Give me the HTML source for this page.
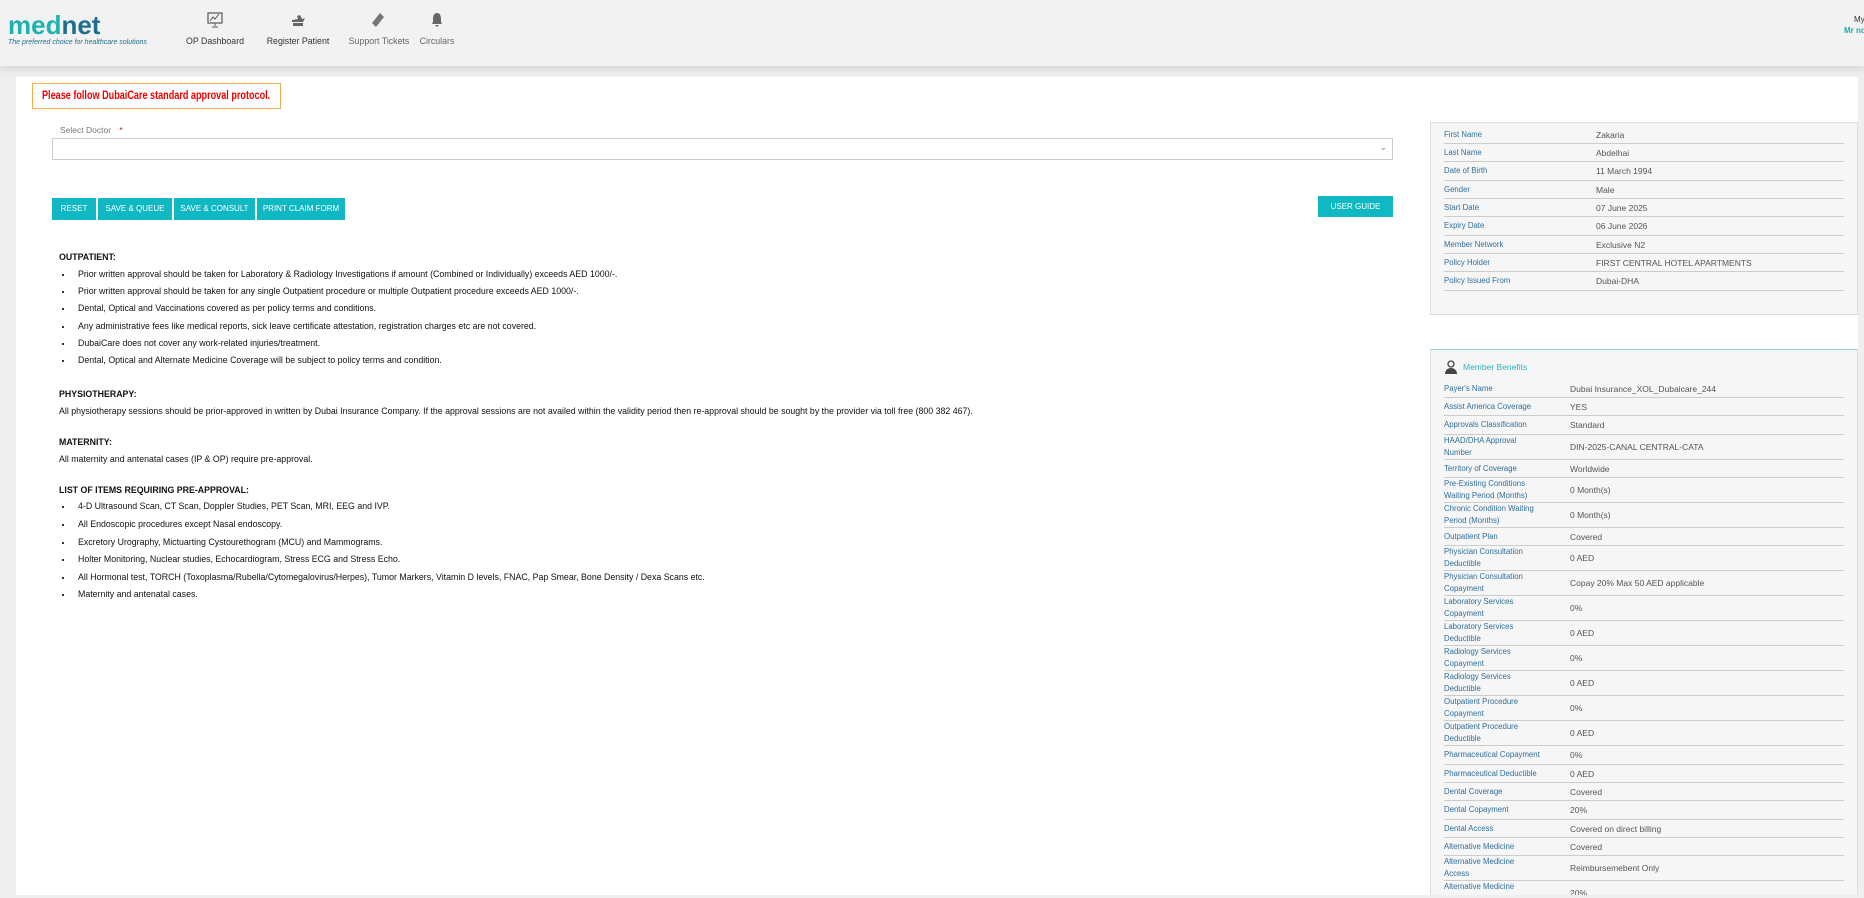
<!DOCTYPE html>
<html><head><meta charset="utf-8"><style>
*{margin:0;padding:0;box-sizing:border-box}
body{width:1864px;height:898px;overflow:hidden;background:#efefef;font-family:"Liberation Sans",Arial,sans-serif;position:relative;white-space:nowrap}
.hdr{position:absolute;left:0;top:0;width:1864px;height:66px;background:#f2f2f2;box-shadow:0 3px 8px rgba(0,0,0,.12)}
.logo{position:absolute;left:8px;top:10px;font-size:26px;font-weight:bold;color:#1fb3b0}
.logo span{color:#1e6f8e}
.tag{position:absolute;left:8px;top:39px;font-size:7px;font-style:italic;color:#1e6f8e}
.nav{position:absolute;top:36px;width:100px;margin-left:-50px;font-size:8.8px;color:#333;text-align:center;white-space:nowrap}
.nav svg{position:absolute;left:42px;top:-24px}
.main{position:absolute;left:16px;top:77px;width:1842px;height:818px;background:#fff}
.abs{position:absolute}
.alert{left:32px;top:83px;width:249px;height:26px;border:1px solid #f0ad4e;white-space:nowrap}
.alert span{position:absolute;left:9px;top:6px;color:#e00;font-weight:bold;font-size:11.5px;transform:scaleX(.79);transform-origin:0 0}
.btn{position:absolute;top:198px;height:22px;background:#0fb8c3;color:#fff;font-size:8px;text-align:center;line-height:22px;white-space:nowrap}
.txt{position:absolute;left:59px;font-size:8.8px;color:#111}
.b{font-weight:bold}
.li{position:absolute;left:59px;font-size:8.8px;color:#111}
.li::before{content:"";position:absolute;left:3px;top:5px;width:2px;height:2px;background:#333}
.li span{margin-left:19px}
.p1{left:1430px;top:122px;width:428px;height:193px;background:#f6f6f6;border:1px solid #ddd}
.row{display:flex;align-items:center;border-bottom:1px solid #ccc;margin:0 13px 0 13px}
.lab{color:#2f6f9a;font-size:7.8px;line-height:12px;white-space:nowrap}
.val{color:#555;font-size:8.5px}
.p2{left:1430px;top:349px;width:428px;height:546px;overflow:hidden;background:#f6f6f6;border:1px solid #ddd;border-top:1px solid #8fd3cc;border-bottom:none}
</style></head><body>
<div class="hdr">
 <div class="logo">med<span>net</span></div>
 <div class="tag">The preferred choice for healthcare solutions</div>
 <div class="nav" style="left:215px"><svg width="16" height="16" viewBox="0 0 16 16"><rect x="1" y="1" width="14" height="10" fill="none" stroke="#555" stroke-width="1.2"/><path d="M3 9l3-4 2 2 4-5M8 11v3M5 15h6" fill="none" stroke="#555" stroke-width="1"/></svg>OP Dashboard</div>
 <div class="nav" style="left:298px"><svg width="18" height="16" viewBox="0 0 18 16"><path d="M2 10h11l2-4-3 1-2-4-3 1 1 3-6 1z M3 11h10v3H3z" fill="#666"/></svg>Register Patient</div>
 <div class="nav" style="left:379px;color:#666"><svg width="14" height="16" viewBox="0 0 14 16"><path d="M9 1l4 4-8 10-4-4z" fill="#777"/></svg>Support Tickets</div>
 <div class="nav" style="left:437px;color:#666"><svg width="12" height="15" viewBox="0 0 12 15" style="left:44px"><path d="M6 1c-3 0-4 3-4 6v3l-1 2h10l-1-2V7c0-3-1-6-4-6zM4 13h4l-2 2z" fill="#666"/></svg>Circulars</div>
 <div class="abs" style="left:1854px;top:15px;font-size:8px;color:#333">My</div>
 <div class="abs" style="left:1844px;top:26px;font-size:8px;color:#2aa;font-weight:bold">Mr no</div>
</div>
<div class="main"></div>
<div class="abs alert"><span>Please follow DubaiCare standard approval protocol.</span></div>
<div class="abs" style="left:60px;top:125px;font-size:8.5px;color:#777">Select Doctor <span style="color:#e00;margin-left:6px">*</span></div>
<div class="abs" style="left:52px;top:138px;width:1341px;height:22px;border:1px solid #ccc;background:#fff"><span style="position:absolute;right:5px;top:3px;font-size:9px;color:#888">&#8964;</span></div>
<div class="btn" style="left:52px;width:44px">RESET</div>
<div class="btn" style="left:98px;width:74px">SAVE &amp; QUEUE</div>
<div class="btn" style="left:174px;width:81px">SAVE &amp; CONSULT</div>
<div class="btn" style="left:257px;width:88px">PRINT CLAIM FORM</div>
<div class="btn" style="left:1318px;width:75px;top:196px;height:21px;line-height:21px">USER GUIDE</div>

<div class="txt b" style="top:252px">OUTPATIENT:</div>
<div class="li" style="top:269px"><span>Prior written approval should be taken for Laboratory &amp; Radiology Investigations if amount (Combined or Individually) exceeds AED 1000/-.</span></div>
<div class="li" style="top:286px"><span>Prior written approval should be taken for any single Outpatient procedure or multiple Outpatient procedure exceeds AED 1000/-.</span></div>
<div class="li" style="top:303px"><span>Dental, Optical and Vaccinations covered as per policy terms and conditions.</span></div>
<div class="li" style="top:321px"><span>Any administrative fees like medical reports, sick leave certificate attestation, registration charges etc are not covered.</span></div>
<div class="li" style="top:338px"><span>DubaiCare does not cover any work-related injuries/treatment.</span></div>
<div class="li" style="top:355px"><span>Dental, Optical and Alternate Medicine Coverage will be subject to policy terms and condition.</span></div>
<div class="txt b" style="top:389px">PHYSIOTHERAPY:</div>
<div class="txt" style="top:406px">All physiotherapy sessions should be prior-approved in written by Dubai Insurance Company. If the approval sessions are not availed within the validity period then re-approval should be sought by the provider via toll free (800 382 467).</div>
<div class="txt b" style="top:437px">MATERNITY:</div>
<div class="txt" style="top:454px">All maternity and antenatal cases (IP &amp; OP) require pre-approval.</div>
<div class="txt b" style="top:485px">LIST OF ITEMS REQUIRING PRE-APPROVAL:</div>
<div class="li" style="top:501px"><span>4-D Ultrasound Scan, CT Scan, Doppler Studies, PET Scan, MRI, EEG and IVP.</span></div>
<div class="li" style="top:519px"><span>All Endoscopic procedures except Nasal endoscopy.</span></div>
<div class="li" style="top:537px"><span>Excretory Urography, Mictuarting Cystourethogram (MCU) and Mammograms.</span></div>
<div class="li" style="top:554px"><span>Holter Monitoring, Nuclear studies, Echocardiogram, Stress ECG and Stress Echo.</span></div>
<div class="li" style="top:572px"><span>All Hormonal test, TORCH (Toxoplasma/Rubella/Cytomegalovirus/Herpes), Tumor Markers, Vitamin D levels, FNAC, Pap Smear, Bone Density / Dexa Scans etc.</span></div>
<div class="li" style="top:589px"><span>Maternity and antenatal cases.</span></div>

<div class="abs p1">
<div style="height:3px"></div>
<div class="row" style="height:18px"><div class="lab" style="width:152px">First Name</div><div class="val">Zakaria</div></div>
<div class="row" style="height:18px"><div class="lab" style="width:152px">Last Name</div><div class="val">Abdelhai</div></div>
<div class="row" style="height:19px"><div class="lab" style="width:152px">Date of Birth</div><div class="val">11 March 1994</div></div>
<div class="row" style="height:18px"><div class="lab" style="width:152px">Gender</div><div class="val">Male</div></div>
<div class="row" style="height:18px"><div class="lab" style="width:152px">Start Date</div><div class="val">07 June 2025</div></div>
<div class="row" style="height:19px"><div class="lab" style="width:152px">Expiry Date</div><div class="val">06 June 2026</div></div>
<div class="row" style="height:18px"><div class="lab" style="width:152px">Member Network</div><div class="val">Exclusive N2</div></div>
<div class="row" style="height:18px"><div class="lab" style="width:152px">Policy Holder</div><div class="val">FIRST CENTRAL HOTEL APARTMENTS</div></div>
<div class="row" style="height:19px"><div class="lab" style="width:152px">Policy Issued From</div><div class="val">Dubai-DHA</div></div>
</div>

<div class="abs p2">
<div style="height:30px;position:relative">
<svg style="position:absolute;left:14px;top:10px" width="12" height="14" viewBox="0 0 12 14"><circle cx="6" cy="4" r="3" fill="none" stroke="#444" stroke-width="1.3"/><path d="M0 14c0-4 3-6 6-6s6 2 6 6z" fill="#444"/></svg>
<span style="position:absolute;left:32px;top:12px;font-size:8.5px;color:#2bb5c0">Member Benefits</span></div>
<div class="row" style="height:18px"><div class="lab" style="width:126px">Payer's Name</div><div class="val">Dubai Insurance_XOL_Dubaicare_244</div></div>
<div class="row" style="height:18px"><div class="lab" style="width:126px">Assist America Coverage</div><div class="val">YES</div></div>
<div class="row" style="height:19px"><div class="lab" style="width:126px">Approvals Classification</div><div class="val">Standard</div></div>
<div class="row" style="height:25px"><div class="lab" style="width:126px">HAAD/DHA Approval<br>Number</div><div class="val">DIN-2025-CANAL CENTRAL-CATA</div></div>
<div class="row" style="height:18px"><div class="lab" style="width:126px">Territory of Coverage</div><div class="val">Worldwide</div></div>
<div class="row" style="height:25px"><div class="lab" style="width:126px">Pre-Existing Conditions<br>Waiting Period (Months)</div><div class="val">0 Month(s)</div></div>
<div class="row" style="height:25px"><div class="lab" style="width:126px">Chronic Condition Waiting<br>Period (Months)</div><div class="val">0 Month(s)</div></div>
<div class="row" style="height:18px"><div class="lab" style="width:126px">Outpatient Plan</div><div class="val">Covered</div></div>
<div class="row" style="height:25px"><div class="lab" style="width:126px">Physician Consultation<br>Deductible</div><div class="val">0 AED</div></div>
<div class="row" style="height:25px"><div class="lab" style="width:126px">Physician Consultation<br>Copayment</div><div class="val">Copay 20% Max 50 AED applicable</div></div>
<div class="row" style="height:25px"><div class="lab" style="width:126px">Laboratory Services<br>Copayment</div><div class="val">0%</div></div>
<div class="row" style="height:25px"><div class="lab" style="width:126px">Laboratory Services<br>Deductible</div><div class="val">0 AED</div></div>
<div class="row" style="height:25px"><div class="lab" style="width:126px">Radiology Services<br>Copayment</div><div class="val">0%</div></div>
<div class="row" style="height:25px"><div class="lab" style="width:126px">Radiology Services<br>Deductible</div><div class="val">0 AED</div></div>
<div class="row" style="height:25px"><div class="lab" style="width:126px">Outpatient Procedure<br>Copayment</div><div class="val">0%</div></div>
<div class="row" style="height:25px"><div class="lab" style="width:126px">Outpatient Procedure<br>Deductible</div><div class="val">0 AED</div></div>
<div class="row" style="height:19px"><div class="lab" style="width:126px">Pharmaceutical Copayment</div><div class="val">0%</div></div>
<div class="row" style="height:18px"><div class="lab" style="width:126px">Pharmaceutical Deductible</div><div class="val">0 AED</div></div>
<div class="row" style="height:18px"><div class="lab" style="width:126px">Dental Coverage</div><div class="val">Covered</div></div>
<div class="row" style="height:19px"><div class="lab" style="width:126px">Dental Copayment</div><div class="val">20%</div></div>
<div class="row" style="height:18px"><div class="lab" style="width:126px">Dental Access</div><div class="val">Covered on direct billing</div></div>
<div class="row" style="height:18px"><div class="lab" style="width:126px">Alternative Medicine</div><div class="val">Covered</div></div>
<div class="row" style="height:25px"><div class="lab" style="width:126px">Alternative Medicine<br>Access</div><div class="val">Reimbursemebent Only</div></div>
<div class="row" style="height:25px"><div class="lab" style="width:126px">Alternative Medicine<br>Copayment</div><div class="val">20%</div></div>
</div>
<div class="abs" style="left:0;top:895px;width:1864px;height:3px;background:#efefef"></div>
</body></html>
